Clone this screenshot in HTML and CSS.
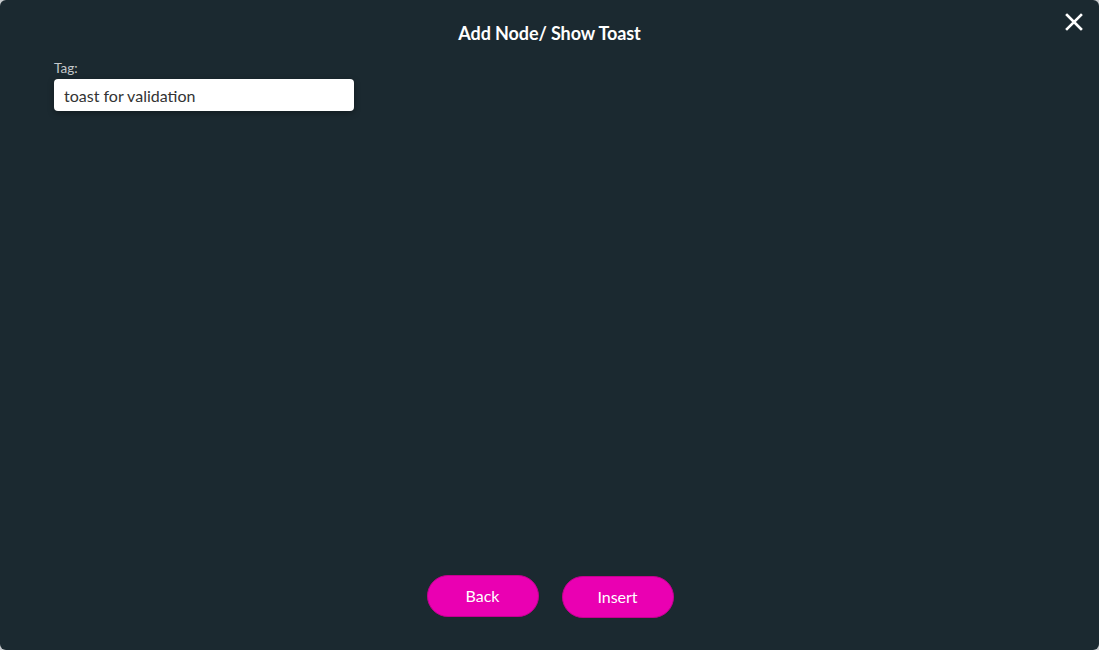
FILE: index.html
```html
<!DOCTYPE html>
<html>
<head>
<meta charset="utf-8">
<link rel="stylesheet" href="styles.css">
</head>
<body>
<div class="modal">
  <div class="header">
    <h1 class="title">Add Node/ Show Toast</h1>
    <button class="close" aria-label="Close">
      <svg width="20" height="20" viewBox="0 0 20 20"><path d="M3 3 L17 17 M17 3 L3 17" stroke="#fff" stroke-width="2.6" stroke-linecap="square" fill="none"/></svg>
    </button>
  </div>
  <div class="body">
    <label class="label">Tag:</label>
    <div class="input">toast for validation</div>
  </div>
  <div class="footer">
    <button class="btn btn-back">Back</button>
    <button class="btn btn-insert">Insert</button>
  </div>
</div>
</body>
</html>
```
FILE: styles.css
```css
html, body {
  margin: 0;
  padding: 0;
  background: #c9cccf;
  width: 1099px;
  height: 650px;
  overflow: hidden;
}
.modal {
  position: relative;
  box-sizing: border-box;
  width: 1099px;
  height: 650px;
  background: #1b2930;
  border-radius: 6px;
  display: flex;
  flex-direction: column;
  font-family: Lato, "Open Sans", sans-serif;
  color: #fff;
}
.header {
  padding-top: 22px;
  height: 38px;
  text-align: center;
}
.title {
  margin: 0;
  font-size: 18px;
  font-weight: 700;
  line-height: 22px;
  letter-spacing: -0.1px;
}
.close {
  position: absolute;
  top: 12px;
  right: 15px;
  width: 20px;
  height: 20px;
  padding: 0;
  border: 0;
  background: none;
  cursor: pointer;
}
.close svg { display: block; }
.body {
  flex: 1;
  padding: 0 54px;
  display: flex;
  flex-direction: column;
  align-items: flex-start;
}
.label {
  font-size: 13.5px;
  color: #c4c8cb;
  line-height: 16px;
  margin-bottom: 3px;
}
.input {
  box-sizing: border-box;
  width: 300px;
  height: 32px;
  background: #fff;
  border-radius: 4px;
  padding: 0 10px;
  font-size: 16px;
  line-height: 34px;
  color: #333;
  box-shadow: 0 2px 6px rgba(0,0,0,0.35);
}
.footer {
  display: flex;
  justify-content: center;
  gap: 23px;
  padding-bottom: 33px;
  padding-left: 1px;
}
.btn {
  box-sizing: border-box;
  width: 112px;
  height: 42px;
  border-radius: 21px;
  background: #ea00b2;
  border: 1px solid #c4008f;
  color: #fff;
  font-family: Lato, "Open Sans", sans-serif;
  font-size: 16px;
  padding: 0 0 2px 0;
  cursor: pointer;
}
.btn-insert {
  margin-top: 1px;
  margin-bottom: -1px;
}
```
